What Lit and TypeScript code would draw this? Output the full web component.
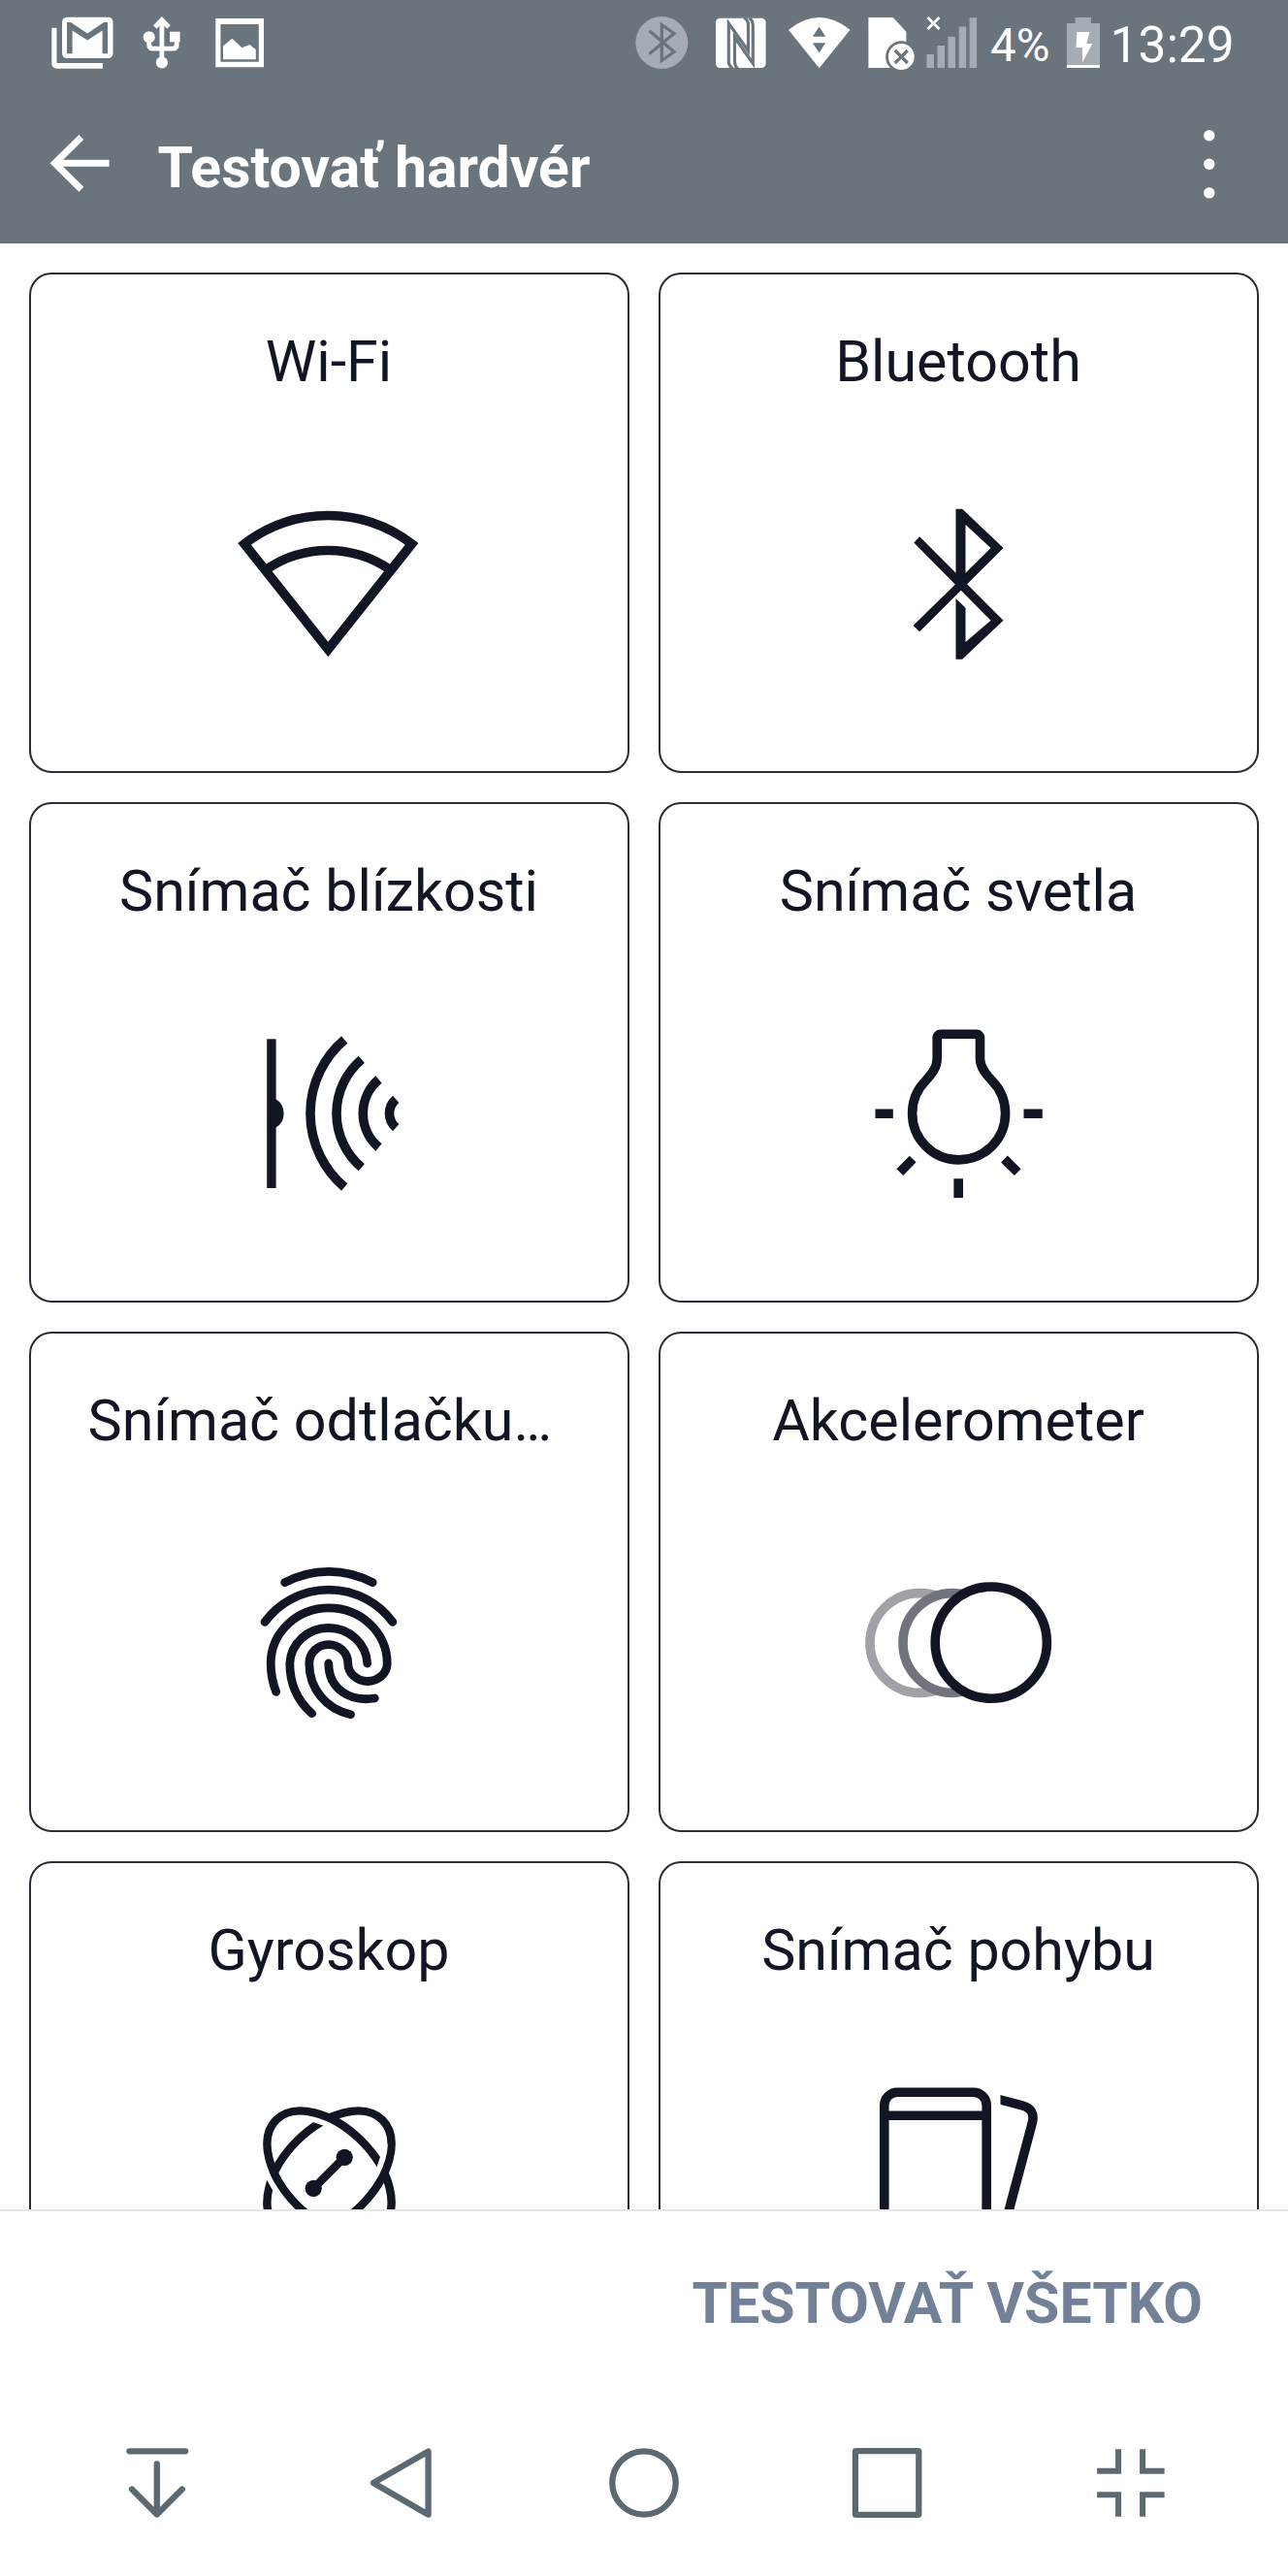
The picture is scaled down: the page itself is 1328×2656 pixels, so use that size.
import { LitElement, html, svg, css, TemplateResult } from "lit";
import { customElement, property } from "lit/decorators.js";
import { classMap } from "lit/directives/class-map.js";

const wifiIcon = svg`
  <path class="s" d="M13 59.8L99.3 168.5L185.6 59.8A141.7 141.7 0 0 0 13 59.8Z"/>
  <path class="s" d="M35.5 86.2A113 113 0 0 1 163 86.2"/>`;

const bluetoothIcon = svg`
  <path fill-rule="evenodd" d="M97.5 23.7H104.2L146.5 64L60.2 150.3L53.5 144L97.5 101ZM107.5 40V89.7L133.5 64Z"/>
  <path d="M54.3 58.4L60.2 52.3L146.5 138.7L104.2 178.7H97.5V116L107.5 125.7V161L133.5 138.7Z"/>`;

const proximityIcon = svg`
  <rect x="36.2" y="24.3" width="9.4" height="153.7"/>
  <path d="M45 86.1A17.2 17.2 0 0 1 45 115.9Z"/>
  <path class="s" d="M116.2 25A99.6 99.6 0 0 0 116.2 177"/>
  <path class="s" d="M133.8 45.3A73 73 0 0 0 133.8 156.7"/>
  <path class="s" d="M151.5 66A45.9 45.9 0 0 0 151.5 136"/>
  <path class="s" d="M169.2 86.3A19.5 19.5 0 0 0 169.2 115.7"/>`;

const lightIcon = svg`
  <path class="s" d="M78.2 44.7V22.8a3.5 3.5 0 0 1 3.5 -3.5H119a3.5 3.5 0 0 1 3.5 3.5V44.7C122.7 54 129 61 134.4 66.8A48 48 0 1 1 66.8 66.8C72 61 78.2 54 78.2 44.7Z"/>
  <path class="s" d="M14.5 101.2H32.8M167.5 101.2H186.8M100.2 168.3V188M53.2 148L39.8 161.7M147.5 148L161.3 161.7"/>`;

const fingerprintIcon = svg`
  <g class="s finger">
    <path d="M54.7 38.7A95.5 95.5 0 0 1 145.2 38.7"/>
    <path d="M34 79.3A82 82 0 0 1 165.9 79.3"/>
    <path d="M45.7 151.3C42 142 40.2 132 40.2 122A59.8 57 0 0 1 160.2 122A20.2 18.5 0 0 1 119.8 122A20 19.4 0 0 0 79.8 122C79.8 148 97 169 122.5 174.7"/>
    <path d="M82.6 173.7C67 160 59.8 142 59.8 122A40 38.4 0 0 1 139.7 122"/>
    <path d="M99.8 122C99.8 148 121 162 147.3 158"/>
  </g>`;

const accelerometerIcon = svg`
  <circle class="s ring-far" cx="60.4" cy="101" r="51.4"/>
  <circle class="s ring-mid" cx="94.4" cy="101" r="51.4"/>
  <circle class="s ring-near" cx="133.8" cy="100.6" r="57.6"/>`;

const gyroIcon = svg`
  <clipPath id="gyro-top"><rect x="72" y="38" width="32" height="24"/></clipPath>
  <clipPath id="gyro-left"><rect x="22" y="92" width="26" height="34"/></clipPath>
  <clipPath id="gyro-right"><rect x="138" y="72" width="30" height="34"/></clipPath>
  <g class="s thin">
    <ellipse cx="100.5" cy="101.5" rx="77.4" ry="46.9" transform="rotate(-45 100.5 101.5)"/>
    <g clip-path="url(#gyro-top)"><ellipse class="gap" cx="100.5" cy="101.5" rx="70.4" ry="39.9" transform="rotate(45 100.5 101.5)"/></g>
    <g clip-path="url(#gyro-left)"><ellipse class="gap" cx="100.5" cy="101.5" rx="84.4" ry="53.9" transform="rotate(45 100.5 101.5)"/></g>
    <ellipse cx="100.5" cy="101.5" rx="77.4" ry="46.9" transform="rotate(45 100.5 101.5)"/>
    <g clip-path="url(#gyro-right)"><ellipse class="gap" cx="100.5" cy="101.5" rx="70.4" ry="39.9" transform="rotate(-45 100.5 101.5)"/></g>
    <path d="M116.2 85.3L84.2 117.3"/>
  </g>
  <circle cx="116.2" cy="85.3" r="8.6"/>
  <circle cx="84.2" cy="117.3" r="8.6"/>`;

const motionIcon = svg`
  <clipPath id="motion-side"><rect x="143.5" y="0" width="56" height="200"/></clipPath>
  <rect class="s" x="23.8" y="18.2" width="105.4" height="165" rx="13.5"/>
  <path class="s" d="M24 42.2H129"/>
  <path class="s" clip-path="url(#motion-side)" d="M136 24.1L166 31.8Q179.500 35.500 176.500 49L152.500 139L142 180"/>`;

interface Sensor {
  name: string;
  icon: TemplateResult;
  truncated?: boolean;
}

const SENSORS: Sensor[] = [
  { name: "Wi-Fi", icon: wifiIcon },
  { name: "Bluetooth", icon: bluetoothIcon },
  { name: "Snímač blízkosti", icon: proximityIcon },
  { name: "Snímač svetla", icon: lightIcon },
  { name: "Snímač odtlačku…", icon: fingerprintIcon, truncated: true },
  { name: "Akcelerometer", icon: accelerometerIcon },
  { name: "Gyroskop", icon: gyroIcon },
  { name: "Snímač pohybu", icon: motionIcon },
];

@customElement("sensor-card")
class SensorCard extends LitElement {
  @property({ attribute: false }) sensor!: Sensor;

  static styles = css`
    :host {
      display: flex;
      flex-direction: column;
      align-items: center;
      box-sizing: border-box;
      height: 516px;
      padding: 55px 58px 0 57px;
      border: 2px solid #2a2c37;
      border-radius: 23px;
      background: #fefefe;
      color: #121624;
    }
    .name {
      align-self: stretch;
      text-align: center;
      font-size: 59.2px;
      line-height: 70px;
      white-space: nowrap;
    }
    .name.truncated { text-align: left; padding-left: 1.5px; }
    svg {
      display: block;
      flex: none;
      width: 200px;
      height: 200px;
      margin-top: 93px;
      margin-right: 1px;
      fill: #121624;
    }
    .s { fill: none; stroke: #121624; stroke-width: 9.6; }
    .finger { stroke-width: 8.8; stroke-linecap: round; }
    .thin { stroke-width: 8.4; }
    .gap { stroke: #fefefe; stroke-width: 5.8; }
    .ring-far { stroke: #a0a2a7; fill: #fefefe; }
    .ring-mid { stroke: #71737d; fill: #fefefe; }
    .ring-near { fill: #fefefe; }
  `;

  render() {
    const { name, icon, truncated } = this.sensor;
    return html`
      <div class=${classMap({ name: true, truncated: !!truncated })}>${name}</div>
      <svg viewBox="0 0 200 200">${icon}</svg>
    `;
  }
}

@customElement("status-bar")
class StatusBar extends LitElement {
  static styles = css`
    :host {
      display: flex;
      height: 88px;
      padding-left: 52px;
      color: #fff;
      line-height: 88px;
      white-space: nowrap;
    }
    svg { display: block; flex: none; height: 88px; fill: #fff; }
    .usb { margin-left: 28px; }
    .photo { margin-left: 36px; }
    .bt { margin-left: 382px; }
    .nfc { margin-left: 28px; }
    .wifi { margin-left: 22px; }
    .sim { margin-left: 17px; }
    .signal { margin-left: 9px; }
    .percent { margin-left: 12px; width: 66px; font-size: 47.5px; padding-top: 3px; }
    .battery { margin-left: 12px; }
    .clock { margin-left: 9.5px; font-size: 51.5px; padding-top: 3px; }
    .dim { fill: #a6acb3; }
    .cut { fill: #6a747d; }
    .line { fill: none; stroke: #6a747d; stroke-width: 3.2; }
    .white { fill: none; stroke: #fff; stroke-width: 4.8; }
  `;

  render() {
    return html`
      <svg width="66" viewBox="52 0 66 88">
        <path d="M53.3 28.7H58.5V65H106V70.7H58.3a5 5 0 0 1 -5 -5Z"/>
        <rect x="64" y="17.8" width="52.500" height="42.300" rx="5"/>
        <path class="cut" d="M69 55.300V23H73L90.200 34.500L107 23H111V55.300H105.600V31.500L90.200 41.500L74.600 31.500V55.300Z"/>
      </svg>
      <svg class="usb" width="40" viewBox="146 0 40 88">
        <path class="white" d="M166.900 22V64M159.800 28L166.900 20.500L174 28M153.700 38V46Q153.700 50.200 158 50.200H178Q182.200 50.200 182.200 46V38"/>
        <circle cx="153.700" cy="38.300" r="6.100"/>
        <rect x="175" y="32.700" width="10.600" height="10.600"/>
        <circle cx="166.900" cy="64.500" r="6.100"/>
      </svg>
      <svg class="photo" width="51" viewBox="222 0 51 88">
        <path fill-rule="evenodd" d="M222.300 19H272V69.200H222.300ZM227.400 25V63.700H266.800V25Z"/>
        <path d="M230 61.200V47.500L239.300 39.800L249.500 49.300L257.300 46L263.800 51V61.200Z"/>
      </svg>

      <svg class="bt" width="55" viewBox="655 0 55 88">
        <circle class="dim" cx="682.300" cy="44" r="27"/>
        <path class="line" d="M669.500 31.700L695 53.500L682.300 62.500V25.500L695 34.500L669.500 55.500"/>
      </svg>
      <svg class="nfc" width="52" viewBox="738 0 52 88">
        <rect x="738" y="18.800" width="51.600" height="51.300" rx="4.500"/>
        <path class="line" d="M755.500 70.500Q751.300 68 751.300 63V24L771.500 52.500V26Q771.500 20 767 18.500M772.500 18.500Q776.300 21 776.300 26V65.500L757.500 38.500V63Q757.500 69 761 70.500"/>
      </svg>
      <svg class="wifi" width="66" viewBox="812 0 66 88">
        <path d="M813 30.800Q844.700 5.400 876.500 30.800L844.700 70.300Z"/>
        <path class="cut" d="M837.900 37.800H851.200L844.600 27.600ZM837.900 44.300H851.200L844.600 54.500Z"/>
      </svg>
      <svg class="sim" width="49" viewBox="895 0 49 88">
        <path d="M895.400 18H920.800L934.400 32.700V70H895.400Z"/>
        <circle class="cut" cx="929.300" cy="58.500" r="16.200"/>
        <circle cx="929.300" cy="58.500" r="13.400"/>
        <path class="line" d="M922.800 52L935.800 65M935.800 52L922.800 65"/>
      </svg>
      <svg class="signal" width="56" viewBox="953 0 56 88">
        <path fill="none" stroke="#fff" stroke-width="2.800" d="M956.500 18L968.500 30M968.500 18L956.500 30"/>
        <path class="dim" d="M955.500 56h7.500V70h-7.500ZM966.500 47h7.500V70h-7.500ZM977.500 37.800h7.500V70h-7.500ZM988.700 27.500h7.500V70h-7.500ZM999.600 18.200h7.500V70h-7.500Z"/>
      </svg>
      <span class="percent">4%</span>
      <svg class="battery" width="36" viewBox="1099 0 36 88">
        <path class="dim" d="M1099.900 24H1108.600V18H1124.900V24H1134V67H1099.900Z"/>
        <rect x="1099.900" y="67" width="34.100" height="3"/>
        <path d="M1110.400 33H1123.500L1120.200 45H1126.200L1116 64.500V49H1109.400Z"/>
      </svg>
      <span class="clock">13:29</span>
    `;
  }
}

@customElement("nav-bar")
class NavBar extends LitElement {
  static styles = css`
    :host {
      display: flex;
      justify-content: space-between;
      align-items: center;
      box-sizing: border-box;
      height: 192px;
      padding: 0 122px 0 121px;
      background: #fefefe;
    }
    svg {
      display: block;
      width: 84px;
      height: 84px;
      fill: none;
      stroke: #5d6971;
      stroke-width: 6.3;
      stroke-linecap: round;
      stroke-linejoin: round;
    }
    .square-ends { stroke-linecap: butt; stroke-linejoin: miter; stroke-width: 6; }
  `;

  render() {
    return html`
      <svg viewBox="0 0 84 84"><path d="M12.500 9.300H70.200M40.800 22.500V74.500M15 48.500L40.800 74.500L66.800 48.500"/></svg>
      <svg viewBox="0 0 84 84"><path d="M14 42L70.600 9.500V74.700Z"/></svg>
      <svg viewBox="0 0 84 84"><circle cx="42" cy="42" r="32.700"/></svg>
      <svg viewBox="0 0 84 84"><rect x="9.900" y="9.200" width="65.400" height="65.600" rx="0.500"/></svg>
      <svg class="square-ends" viewBox="0 0 84 84"><path d="M9.100 29.700H31.100V7.300M78.600 29.700H56.100V7.300M9.100 54.200H31.100V76.700M78.600 54.200H56.100V76.700"/></svg>
    `;
  }
}

@customElement("app-root")
class AppRoot extends LitElement {
  static styles = css`
    :host {
      display: flex;
      flex-direction: column;
      width: 1328px;
      height: 2656px;
      overflow: hidden;
      background: #fefefe;
      font-family: Roboto, "Noto Sans", sans-serif;
    }
    .header {
      flex: none;
      height: 251px;
      background: #6a747d;
      color: #fff;
    }
    .app-bar {
      display: flex;
      align-items: center;
      height: 163px;
    }
    .back { display: block; margin-left: 50px; }
    .menu { display: block; margin-left: auto; margin-right: 71px; fill: #fff; }
    .title {
      margin: 0;
      padding: 6px 0 0 48.5px;
      font-size: 58.9px;
      font-weight: 700;
      line-height: 70px;
      white-space: nowrap;
    }
    .list {
      flex: none;
      box-sizing: border-box;
      height: 2027px;
      overflow: hidden;
      padding: 30px 30px 0;
      display: grid;
      grid-template-columns: 1fr 1fr;
      grid-auto-rows: 516px;
      gap: 30px;
    }
    .actions {
      flex: none;
      display: flex;
      justify-content: flex-end;
      box-sizing: border-box;
      height: 186px;
      border-top: 2px solid #e6e6e7;
      padding: 60px 88px 0 0;
    }
    .test-all {
      border: 0;
      padding: 0;
      height: 70px;
      background: none;
      color: #738198;
      font: 700 59px/70px Roboto, "Noto Sans", sans-serif;
      white-space: nowrap;
    }
  `;

  render() {
    return html`
      <header class="header">
        <status-bar></status-bar>
        <div class="app-bar">
          <svg class="back" width="64" height="64" viewBox="0 0 64 64" fill="none" stroke="#fff" stroke-width="7">
            <path d="M62.600 30.300H6M33.800 3.500L6.500 30.300L33.800 57.200"/>
          </svg>
          <h1 class="title">Testovať hardvér</h1>
          <svg class="menu" width="20" height="80" viewBox="0 0 20 80">
            <circle cx="9.800" cy="9.700" r="5.700"/>
            <circle cx="9.800" cy="39.300" r="5.700"/>
            <circle cx="9.800" cy="68.900" r="5.700"/>
          </svg>
        </div>
      </header>
      <main class="list">
        ${SENSORS.map((s) => html`<sensor-card .sensor=${s}></sensor-card>`)}
      </main>
      <div class="actions"><button class="test-all">TESTOVAŤ VŠETKO</button></div>
      <nav-bar></nav-bar>
    `;
  }
}
